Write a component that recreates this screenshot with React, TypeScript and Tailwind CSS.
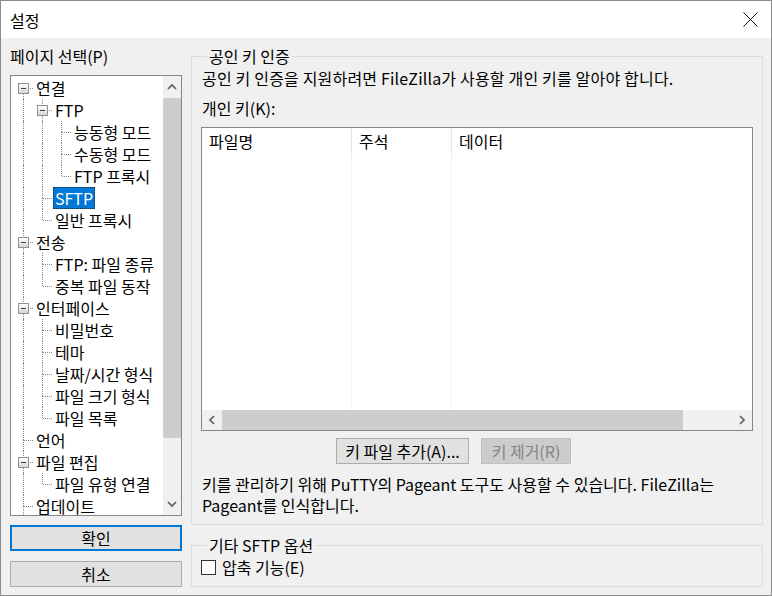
import React from "react";

type TreeNode = {
  label: string;
  children?: TreeNode[];
  selected?: boolean;
};

type Row = {
  label: string;
  depth: number;
  guides: boolean[];
  first: boolean;
  last: boolean;
  expander: boolean;
  selected?: boolean;
};

const tree: TreeNode[] = [
  {
    label: "연결",
    children: [
      {
        label: "FTP",
        children: [
          { label: "능동형 모드" },
          { label: "수동형 모드" },
          { label: "FTP 프록시" },
        ],
      },
      { label: "SFTP", selected: true },
      { label: "일반 프록시" },
    ],
  },
  {
    label: "전송",
    children: [{ label: "FTP: 파일 종류" }, { label: "중복 파일 동작" }],
  },
  {
    label: "인터페이스",
    children: [
      { label: "비밀번호" },
      { label: "테마" },
      { label: "날짜/시간 형식" },
      { label: "파일 크기 형식" },
      { label: "파일 목록" },
    ],
  },
  { label: "언어" },
  { label: "파일 편집", children: [{ label: "파일 유형 연결" }] },
  { label: "업데이트" },
];

function flatten(nodes: TreeNode[], depth: number, guides: boolean[], out: Row[]) {
  nodes.forEach((n, i) => {
    // root list continues below the visible area, so no root is "last"
    const last = depth > 0 && i === nodes.length - 1;
    out.push({
      label: n.label,
      depth,
      guides,
      first: i === 0,
      last,
      expander: !!n.children,
      selected: n.selected,
    });
    if (n.children) flatten(n.children, depth + 1, [...guides, !last], out);
  });
  return out;
}

const rows = flatten(tree, 0, [], []);

const dot = "border-dotted border-[#8a8a8a]";

function TreeRow({ row }: { row: Row }) {
  return (
    <div className="flex h-[22px] items-center">
      {row.guides.map((g, i) => (
        <div key={i} className="relative h-[22px] w-[19px] shrink-0">
          {g && <div className={`absolute left-[9px] top-0 bottom-0 border-l ${dot}`} />}
        </div>
      ))}
      <div className="relative h-[22px] w-[19px] shrink-0">
        {!(row.depth === 0 && row.first) && (
          <div className={`absolute left-[9px] top-0 h-[11px] border-l ${dot}`} />
        )}
        {!row.last && (
          <div className={`absolute left-[9px] top-[11px] bottom-0 border-l ${dot}`} />
        )}
        <div className={`absolute left-[10px] right-0 top-[11px] border-t ${dot}`} />
        {row.expander && (
          <div className="absolute left-[4px] top-[6px] flex h-[11px] w-[11px] items-center justify-center border border-[#919191] bg-gradient-to-b from-white to-[#d6d6d6]">
            <div className="h-px w-[5px] bg-[#33415c]" />
          </div>
        )}
      </div>
      <span
        className={
          row.selected
            ? "ml-[1px] h-[22px] border border-dotted border-[#2b2b2b] bg-[#0078d7] px-[1px] leading-[20px] text-white"
            : "ml-[1px] px-[2px] leading-[22px] whitespace-nowrap"
        }
      >
        {row.label}
      </span>
    </div>
  );
}

function Chevron({ dir }: { dir: "up" | "down" | "left" | "right" }) {
  const pts = {
    up: "1,6 5,2 9,6",
    down: "1,2 5,6 9,2",
    left: "6,1 2,5 6,9",
    right: "2,1 6,5 2,9",
  }[dir];
  const vertical = dir === "up" || dir === "down";
  return (
    <svg width={vertical ? 10 : 8} height={vertical ? 8 : 10}>
      <polyline points={pts} fill="none" stroke="#606060" strokeWidth="1.7" />
    </svg>
  );
}

export default function App() {
  return (
    <div className="flex h-[596px] w-[772px] flex-col border border-[#8c8c8c] bg-[#f0f0f0] font-['Noto_Sans_CJK_KR',sans-serif] text-[16px] text-black">
      {/* title bar */}
      <div className="flex h-[37px] shrink-0 items-center justify-between bg-white pl-[9px] pr-[13px]">
        <span className="leading-[20px]">설정</span>
        <svg width="15" height="15">
          <line x1="0.5" y1="0.5" x2="14.5" y2="14.5" stroke="#111" strokeWidth="1" />
          <line x1="14.5" y1="0.5" x2="0.5" y2="14.5" stroke="#111" strokeWidth="1" />
        </svg>
      </div>

      <div className="flex gap-[9px] pl-[9px] pt-[8px]">
        {/* left column */}
        <div className="flex w-[172px] flex-col">
          <div className="leading-[20px]">페이지 선택(P)</div>
          <div className="mt-[9px] flex h-[441px] border border-[#828790] bg-white">
            <div className="flex-1 overflow-hidden pl-[3px] pt-[1px]">
              {rows.map((r, i) => (
                <TreeRow key={i} row={r} />
              ))}
            </div>
            <div className="flex w-[18px] flex-col bg-[#f0f0f0]">
              <div className="flex h-[22px] items-center justify-center">
                <Chevron dir="up" />
              </div>
              <div className="h-[340px] bg-[#cdcdcd]" />
              <div className="flex-1" />
              <div className="flex h-[22px] items-center justify-center">
                <Chevron dir="down" />
              </div>
            </div>
          </div>
          <button className="mt-[9px] h-[26px] border-2 border-[#0078d7] bg-[#e1e1e1] leading-[20px]">
            확인
          </button>
          <button className="mt-[10px] h-[26px] border border-[#adadad] bg-[#e1e1e1] leading-[20px]">
            취소
          </button>
        </div>

        {/* right column */}
        <div className="flex w-[572px] flex-col">
          <fieldset className="h-[479px] border border-[#dcdcdc] px-[9px]">
            <legend className="ml-[6px] px-[2px] leading-[20px]">공인 키 인증</legend>
            <div className="mt-[2px] pl-[1px] leading-[20px] tracking-[0.18px]">
              공인 키 인증을 지원하려면 FileZilla가 사용할 개인 키를 알아야 합니다.
            </div>
            <div className="mt-[10px] pl-[1px] leading-[20px]">개인 키(K):</div>
            <div className="mt-[9px] flex h-[304px] flex-col border border-[#828790] bg-white">
              <div className="flex h-[26px] shrink-0">
                <div className="w-[150px] border-r border-[#e5e5e5] pl-[7px] leading-[26px]">파일명</div>
                <div className="w-[100px] border-r border-[#e5e5e5] pl-[7px] leading-[26px]">주석</div>
                <div className="flex-1 pl-[7px] leading-[26px]">데이터</div>
              </div>
              <div className="flex flex-1">
                <div className="w-[150px] border-r border-[#eef3fb]" />
                <div className="w-[100px] border-r border-[#eef3fb]" />
                <div className="flex-1" />
              </div>
              <div className="flex h-[20px] shrink-0 bg-[#f0f0f0]">
                <div className="flex w-[19px] items-center justify-center">
                  <Chevron dir="left" />
                </div>
                <div className="flex flex-1 items-stretch">
                  <div className="ml-[1px] w-[461px] bg-[#cdcdcd]" />
                </div>
                <div className="flex w-[20px] items-center justify-center">
                  <Chevron dir="right" />
                </div>
              </div>
            </div>
            <div className="mt-[7px] flex gap-[12px] pl-[135px]">
              <button className="h-[26px] w-[133px] border border-[#adadad] bg-[#e1e1e1] leading-[20px]">
                키 파일 추가(A)...
              </button>
              <button className="h-[26px] w-[90px] border border-[#bfbfbf] bg-[#cccccc] leading-[20px] text-[#838383]">
                키 제거(R)
              </button>
            </div>
            <div className="mt-[10px] pl-[1px] leading-[21px]">
              키를 관리하기 위해 PuTTY의 Pageant 도구도 사용할 수 있습니다. FileZilla는
              <br />
              Pageant를 인식합니다.
            </div>
          </fieldset>

          <fieldset className="mt-[10px] h-[52px] border border-[#dcdcdc] px-[9px]">
            <legend className="ml-[6px] px-[2px] leading-[20px]">기타 SFTP 옵션</legend>
            <label className="mt-[2px] flex items-center gap-[6px] leading-[20px]">
              <span className="h-[15px] w-[15px] border border-[#333333] bg-white" />
              압축 기능(E)
            </label>
          </fieldset>
        </div>
      </div>
    </div>
  );
}
